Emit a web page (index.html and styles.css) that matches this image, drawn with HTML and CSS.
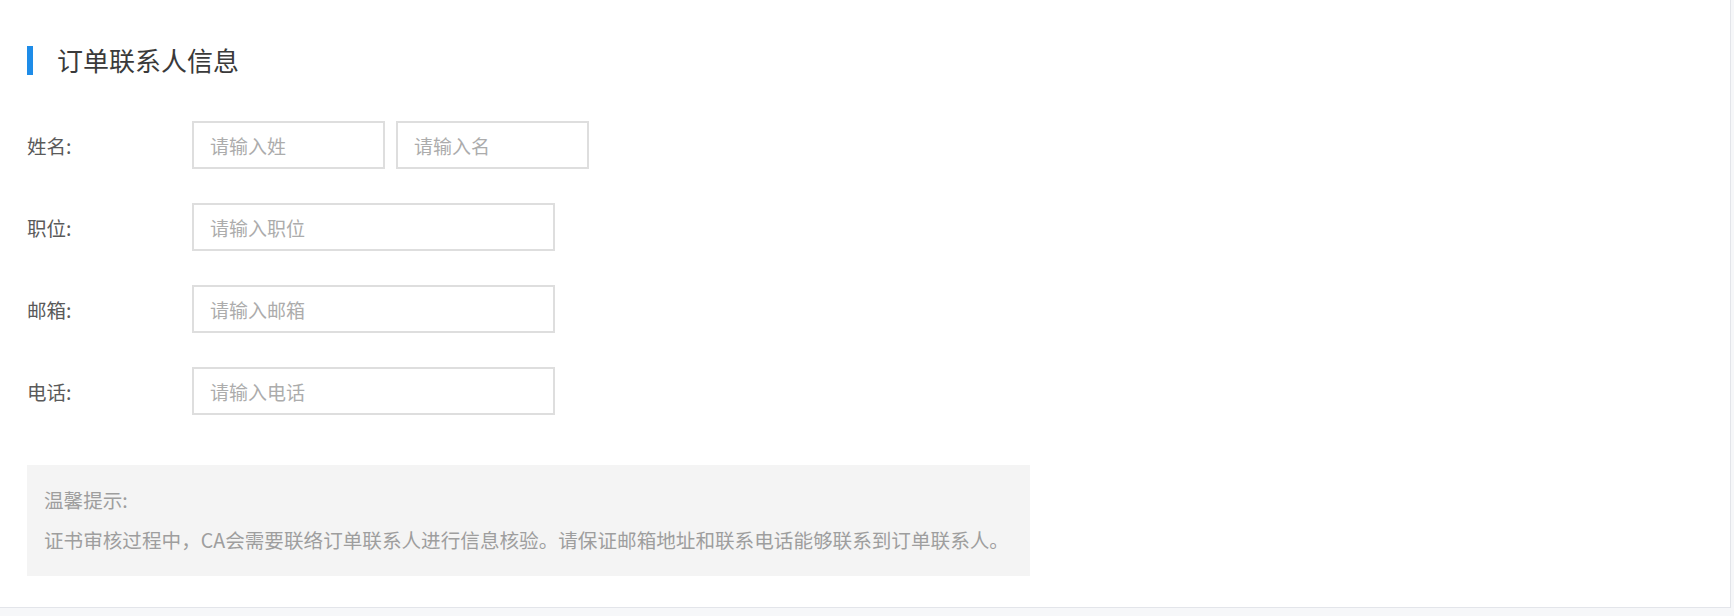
FILE: index.html
```html
<!DOCTYPE html>
<html lang="zh-CN">
<head>
    <meta charset="UTF-8">
    <meta name="viewport" content="width=device-width, initial-scale=1.0">
    <title>订单联系人信息</title>
    <link rel="stylesheet" href="styles.css">
</head>
<body>
    <div class="card">
        <h2 class="section-title"><span class="title-bar"></span>订单联系人信息</h2>

        <form class="contact-form">
            <div class="form-row">
                <label class="form-label">姓名:</label>
                <div class="field-group">
                    <input type="text" class="field field-half" placeholder="请输入姓">
                    <input type="text" class="field field-half" placeholder="请输入名">
                </div>
            </div>

            <div class="form-row">
                <label class="form-label" for="position">职位:</label>
                <input type="text" id="position" class="field field-wide" placeholder="请输入职位">
            </div>

            <div class="form-row">
                <label class="form-label" for="email">邮箱:</label>
                <input type="email" id="email" class="field field-wide" placeholder="请输入邮箱">
            </div>

            <div class="form-row">
                <label class="form-label" for="phone">电话:</label>
                <input type="tel" id="phone" class="field field-wide" placeholder="请输入电话">
            </div>
        </form>

        <div class="tips">
            <p>温馨提示:</p>
            <p>证书审核过程中，CA会需要联络订单联系人进行信息核验。请保证邮箱地址和联系电话能够联系到订单联系人。</p>
        </div>
    </div>
</body>
</html>
```

FILE: styles.css
```css
/* General Styles */
body {
    font-family: "Noto Sans CJK SC", "Noto Sans", sans-serif;
    margin: 0;
    padding: 0;
    background-color: #f6f7f9;
}
.card {
    width: 1731px;
    box-sizing: border-box;
    padding: 45px 0 31px 27px;
    background: #fff;
    border-right: 1px solid #e3e5ea;
    border-bottom: 1px solid #e3e5ea;
}

/* Title */
.section-title {
    display: flex;
    align-items: center;
    margin: 0;
    height: 30px;
    font-size: 26px;
    font-weight: normal;
    line-height: 30px;
    color: #3a3a3a;
}
.title-bar {
    width: 6px;
    height: 29px;
    margin-right: 24px;
    background-color: #1e8ce8;
}

/* Form */
.contact-form {
    display: flex;
    flex-direction: column;
    gap: 34px;
    margin-top: 46px;
}
.form-row {
    display: flex;
    align-items: center;
    height: 48px;
}
.form-label {
    width: 165px;
    font-size: 19.5px;
    color: #5a5a5a;
}
.field-group {
    display: flex;
    gap: 11px;
}
.field {
    box-sizing: border-box;
    height: 48px;
    margin: 0;
    padding: 0 16px;
    font-family: inherit;
    font-size: 19px;
    color: #333;
    border: 2px solid #dedede;
    border-radius: 0;
    outline: none;
}
.field::placeholder {
    color: #acacac;
}
.field-half {
    width: 193px;
}
.field-wide {
    width: 363px;
}

/* Tips */
.tips {
    width: 1003px;
    box-sizing: border-box;
    margin-top: 50px;
    padding: 15px 17px 16px;
    background-color: #f4f4f4;
    font-size: 19.6px;
    line-height: 40px;
    color: #9e9e9e;
}
.tips p {
    margin: 0;
}
```
